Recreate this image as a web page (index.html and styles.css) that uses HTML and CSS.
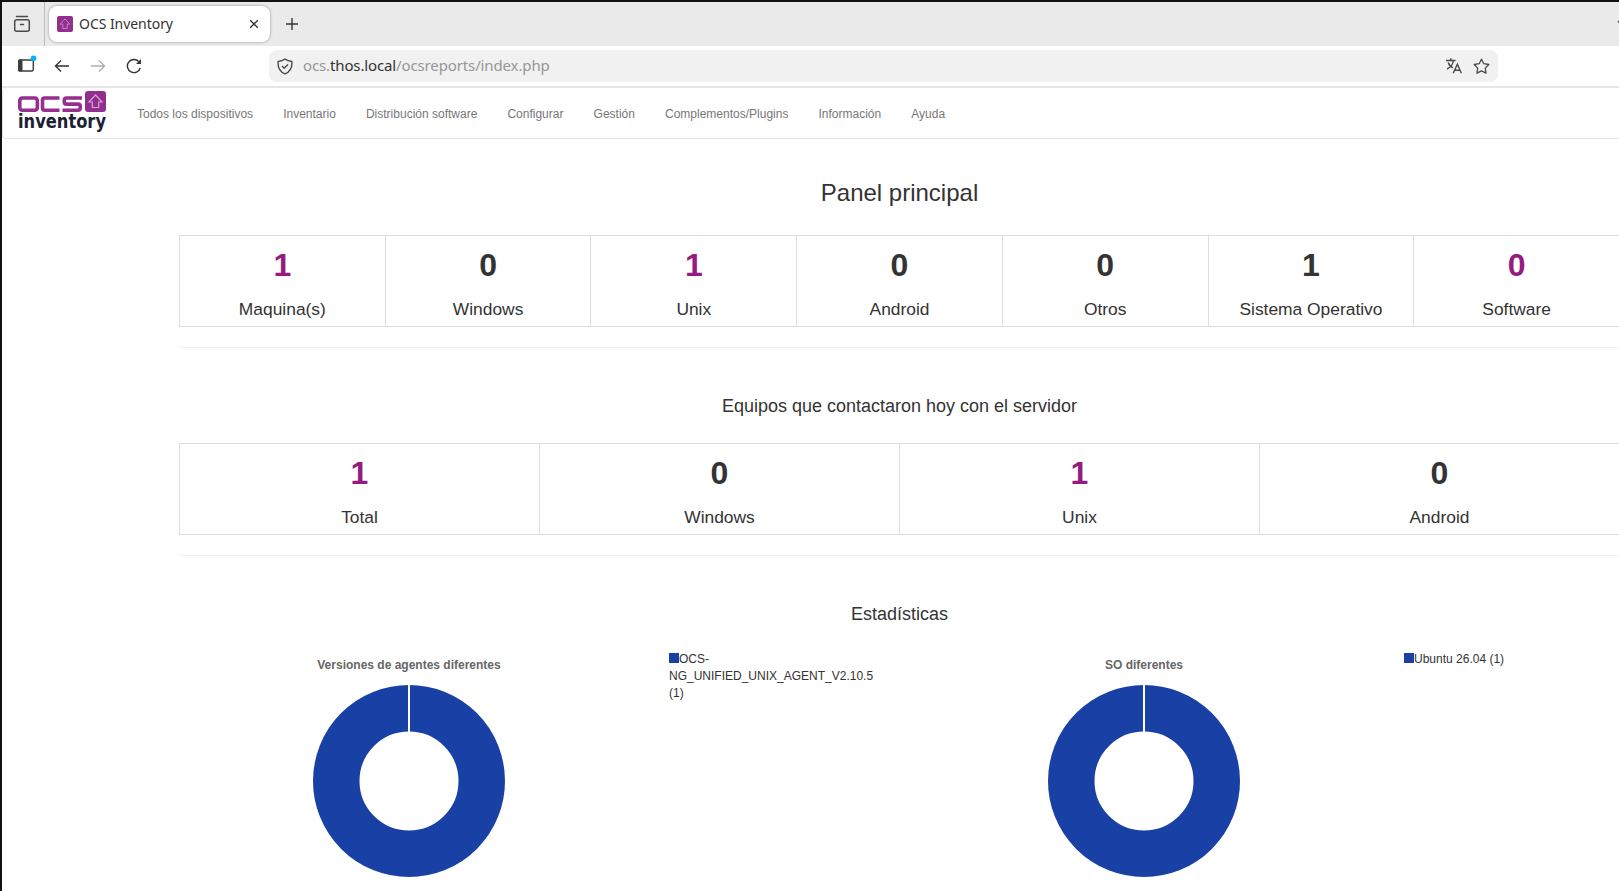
FILE: index.html
```
<!DOCTYPE html>
<html lang="es">
<head>
    <meta charset="UTF-8">
    <meta name="viewport" content="width=device-width, initial-scale=1.0">
    <link rel="stylesheet" href="styles.css">
    <title>OCS Inventory</title>
</head>
<body>
    <div class="window">
        <div class="tab-bar">
            <div class="tab-list-button">
                <svg width="18" height="18" viewBox="0 0 18 18" fill="none" stroke="#4a4a4a" stroke-width="1.5" stroke-linecap="round">
                    <path d="M3.5 1.5h11"/>
                    <rect x="1.700" y="4.700" width="14.600" height="11.600" rx="2"/>
                    <path d="M7.500 9.500h3"/>
                </svg>
            </div>
            <div class="tab">
                <svg class="favicon" width="16" height="16" viewBox="0 0 16 16">
                    <rect width="16" height="16" rx="2" fill="#912f8e"/>
                    <path d="M8 3L3.200 8.200H5.800V12.500H10.200V8.200H12.800Z" fill="none" stroke="#c98cc7" stroke-width=".9"/>
                </svg>
                <span class="tab-title">OCS Inventory</span>
                <svg width="10" height="10" viewBox="0 0 10 10" stroke="#333" stroke-width="1.300">
                    <path d="M1.200 1.200l7.600 7.600M8.800 1.200l-7.600 7.600"/>
                </svg>
            </div>
            <svg class="new-tab" width="14" height="14" viewBox="0 0 14 14" stroke="#333" stroke-width="1.400">
                <path d="M7 1v12M1 7h12"/>
            </svg>
            <svg class="tabs-menu" width="12" height="8" viewBox="0 0 12 8" fill="none" stroke="#444" stroke-width="1.500">
                <path d="M1 1l5 5 5-5"/>
            </svg>
        </div>

        <div class="toolbar">
            <svg class="icon-sidebar" width="20" height="18" viewBox="0 0 20 18">
                <rect x="1.700" y="5" width="14.600" height="11" rx="1.500" fill="none" stroke="#3c3c3c" stroke-width="1.400"/>
                <rect x="1" y="4.500" width="4.500" height="12" rx="1.500" fill="#3c3c3c"/>
                <circle cx="16.500" cy="3.200" r="2.800" fill="#00b3f4"/>
            </svg>
            <svg class="icon-back" width="16" height="14" viewBox="0 0 16 14" fill="none" stroke="#333" stroke-width="1.400">
                <path d="M15 7H1.500M7 1.500L1.500 7L7 12.500"/>
            </svg>
            <svg class="icon-forward" width="16" height="14" viewBox="0 0 16 14" fill="none" stroke="#b0b0b0" stroke-width="1.400">
                <path d="M1 7h13.500M9 1.500L14.500 7L9 12.500"/>
            </svg>
            <svg class="icon-reload" width="16" height="16" viewBox="0 0 16 16" fill="none" stroke="#333" stroke-width="1.400">
                <path d="M14.300 10A6.600 6.600 0 1 1 12.700 3.400"/>
                <path d="M15 1v5h-5z" fill="#333" stroke="none"/>
            </svg>
            <div class="url-bar">
                <svg width="16" height="17" viewBox="0 0 16 17" fill="none" stroke="#4a4a4a" stroke-width="1.400" stroke-linejoin="round">
                    <path d="M8 1C9.800 2.500 12.300 3.300 14.900 3.500C15.300 9.200 13 13.800 8 15.900C3 13.800 .7 9.200 1.100 3.500C3.700 3.300 6.200 2.500 8 1Z"/>
                    <path d="M5 8l2.200 2.200L11 6.500"/>
                </svg>
                <span class="url">ocs.<b>thos.local</b>/ocsreports/index.php</span>
                <svg class="icon-translate" width="16" height="16" viewBox="0 0 16 16" fill="none" stroke="#4a4a4a" stroke-width="1.400">
                    <path d="M0 2.500h9.500M4.800 .3v2.200M7.500 2.500C7 6 4 9.500 1 11M2.200 4.500C3 7 5 9 7 9.800"/>
                    <path d="M7.200 15.300L11.400 6.300L15.400 15.300M8.700 12.300h5.400"/>
                </svg>
                <svg width="17" height="17" viewBox="0 0 17 17" fill="none" stroke="#4a4a4a" stroke-width="1.300" stroke-linejoin="round">
                    <path d="M8.500 1.200L10.800 5.700L15.800 6.500L12.300 10.100L13 15.200L8.500 12.900L4 15.200L4.700 10.100L1.200 6.500L6.200 5.700Z"/>
                </svg>
            </div>
        </div>

        <nav class="navbar">
            <svg class="logo" width="92" height="44" viewBox="0 0 92 44">
                <g fill="none" stroke="#96308f" stroke-width="3.600">
                    <rect x="2.800" y="7" width="17.500" height="12.200" rx="2.500"/>
                    <path d="M42.500 7H27.500Q25.500 7 25.500 9V17Q25.500 19.200 27.500 19.200H42.500"/>
                    <path d="M65 7H49.500Q47.300 7 47.300 9V11Q47.300 13.100 49.500 13.100H61Q63.200 13.100 63.200 15V17Q63.200 19.200 61 19.200H45.500"/>
                </g>
                <rect x="68" y="0" width="21" height="21" rx="3" fill="#912f8e"/>
                <path d="M78.500 4L72 11H75.300V16.500H81.700V11H85Z" fill="none" stroke="#d3a3d1" stroke-width="1.200"/>
                <text class="logo-text" x="1" y="37" textLength="88" lengthAdjust="spacingAndGlyphs">inventory</text>
            </svg>
            <ul class="menu">
                <li>Todos los dispositivos</li>
                <li>Inventario</li>
                <li>Distribución software</li>
                <li>Configurar</li>
                <li>Gestión</li>
                <li>Complementos/Plugins</li>
                <li>Información</li>
                <li>Ayuda</li>
            </ul>
        </nav>

        <main class="container">
            <h3>Panel principal</h3>
            <div class="stats">
                <div class="stat"><a class="number">1</a><p>Maquina(s)</p></div>
                <div class="stat"><span class="number">0</span><p>Windows</p></div>
                <div class="stat"><a class="number">1</a><p>Unix</p></div>
                <div class="stat"><span class="number">0</span><p>Android</p></div>
                <div class="stat"><span class="number">0</span><p>Otros</p></div>
                <div class="stat"><span class="number">1</span><p>Sistema Operativo</p></div>
                <div class="stat"><a class="number">0</a><p>Software</p></div>
            </div>
            <hr>

            <h4>Equipos que contactaron hoy con el servidor</h4>
            <div class="stats">
                <div class="stat"><a class="number">1</a><p>Total</p></div>
                <div class="stat"><span class="number">0</span><p>Windows</p></div>
                <div class="stat"><a class="number">1</a><p>Unix</p></div>
                <div class="stat"><span class="number">0</span><p>Android</p></div>
            </div>
            <hr>

            <h4>Estadísticas</h4>
            <div class="charts">
                <div class="chart">
                    <div class="chart-plot">
                        <div class="chart-title">Versiones de agentes diferentes</div>
                        <svg width="192" height="192" viewBox="0 0 192 192">
                            <circle cx="96" cy="96" r="72.750" fill="none" stroke="#1940a5" stroke-width="46.500"/>
                            <path d="M96 0v48" stroke="#fff" stroke-width="2"/>
                        </svg>
                    </div>
                    <div class="legend"><span class="swatch"></span>OCS-<br>NG_UNIFIED_UNIX_AGENT_V2.10.5<br>(1)</div>
                </div>
                <div class="chart">
                    <div class="chart-plot">
                        <div class="chart-title">SO diferentes</div>
                        <svg width="192" height="192" viewBox="0 0 192 192">
                            <circle cx="96" cy="96" r="72.750" fill="none" stroke="#1940a5" stroke-width="46.500"/>
                            <path d="M96 0v48" stroke="#fff" stroke-width="2"/>
                        </svg>
                    </div>
                    <div class="legend"><span class="swatch"></span>Ubuntu 26.04 (1)</div>
                </div>
            </div>
        </main>
    </div>
</body>
</html>
```
FILE: styles.css
```
* {
    box-sizing: border-box;
}

body {
    margin: 0;
    height: 891px;
    overflow: hidden;
    background-color: #fff;
    color: #333;
    font-family: "Liberation Sans", Arial, sans-serif;
    font-size: 12px;
}

svg {
    display: block;
    flex: none;
}

.window {
    height: 891px;
    overflow: hidden;
    border-top: 2px solid #111;
    border-left: 2px solid #111;
}

/* Browser tabs */
.tab-bar {
    display: flex;
    align-items: center;
    height: 44px;
    background-color: #eaeaea;
}

.tab-list-button {
    display: flex;
    align-items: center;
    width: 43px;
    height: 44px;
    padding-left: 11px;
    border-right: 1px solid #bbb;
}

.tab {
    display: flex;
    align-items: center;
    width: 221px;
    height: 36px;
    margin-left: 4px;
    padding: 0 11px 0 8px;
    background-color: #fff;
    border-radius: 8px;
    box-shadow: 0 0 3px rgba(0, 0, 0, 0.4);
}

.tab-title {
    flex: 1;
    margin: -2px 0 0 6px;
    font-family: "Noto Sans", sans-serif;
    font-size: 14px;
    letter-spacing: -0.05px;
}

.new-tab {
    margin-left: 15px;
}

.tabs-menu {
    margin-left: auto;
    margin-right: -10px;
}

/* Address bar */
.toolbar {
    display: flex;
    align-items: center;
    height: 42px;
    border-bottom: 2px solid #e5e5e5;
}

.icon-sidebar {
    margin: 0 0 4px 15px;
}

.icon-back {
    margin-left: 17px;
}

.icon-forward {
    margin-left: 20px;
}

.icon-reload {
    margin-left: 20px;
}

.url-bar {
    display: flex;
    align-items: center;
    width: 1229px;
    height: 32px;
    margin-left: 127px;
    padding: 0 8px 0 8px;
    background-color: #f1f1f1;
    border-radius: 8px;
}

.url {
    flex: 1;
    margin: -2px 0 0 10px;
    color: #979797;
    font-family: "Noto Sans", sans-serif;
    font-size: 15px;
    letter-spacing: -0.13px;
}

.url b {
    color: #333;
    font-weight: normal;
}

.icon-translate {
    margin-right: 11px;
}

/* Site menu */
.navbar {
    display: flex;
    align-items: center;
    width: 1795px;
    height: 51px;
    padding-left: 14px;
    border: 1px solid #e5e5e5;
    border-top: none;
    border-radius: 4px;
}

.logo {
    overflow: visible;
}

.logo-text {
    fill: #1a2233;
    font-family: "DejaVu Sans", sans-serif;
    font-size: 19px;
    font-weight: bold;
}

.menu {
    display: flex;
    gap: 30.1px;
    margin: 0 0 0 28px;
    padding: 2px 0 0;
    list-style: none;
    color: #777;
}

/* Dashboard */
.container {
    width: 1441px;
    margin-left: 177px;
    text-align: center;
}

h3 {
    margin: 0;
    padding: 40px 0 29px;
    font-size: 24px;
    font-weight: normal;
    line-height: 27px;
}

h4 {
    margin: 0;
    padding: 48px 0 27px;
    font-size: 18px;
    font-weight: normal;
    line-height: 20px;
}

.stats {
    display: flex;
    height: 92px;
    border: 1px solid #ddd;
}

.stat {
    flex: 1;
    padding-top: 11px;
}

.stat + .stat {
    border-left: 1px solid #ddd;
}

.number {
    display: block;
    font-size: 32px;
    font-weight: bold;
    line-height: 36px;
}

a.number {
    color: #961b7e;
}

.stat p {
    margin: 15px 0 0;
    font-size: 17.4px;
    line-height: 22px;
}

hr {
    margin: 20px 0 0;
    border: 0;
    border-top: 1px solid #eee;
}

.charts {
    display: flex;
    text-align: left;
}

.chart {
    display: flex;
    flex: none;
    width: 735px;
}

.chart-plot {
    display: flex;
    flex-direction: column;
    align-items: center;
    width: 460px;
    padding-top: 7px;
}

.chart-title {
    margin-bottom: 13px;
    color: #666;
    font-weight: bold;
    line-height: 14px;
}

.legend {
    margin-left: 30px;
    line-height: 17px;
}

.swatch {
    display: inline-block;
    width: 10px;
    height: 10px;
    background-color: #1940a5;
}
```
